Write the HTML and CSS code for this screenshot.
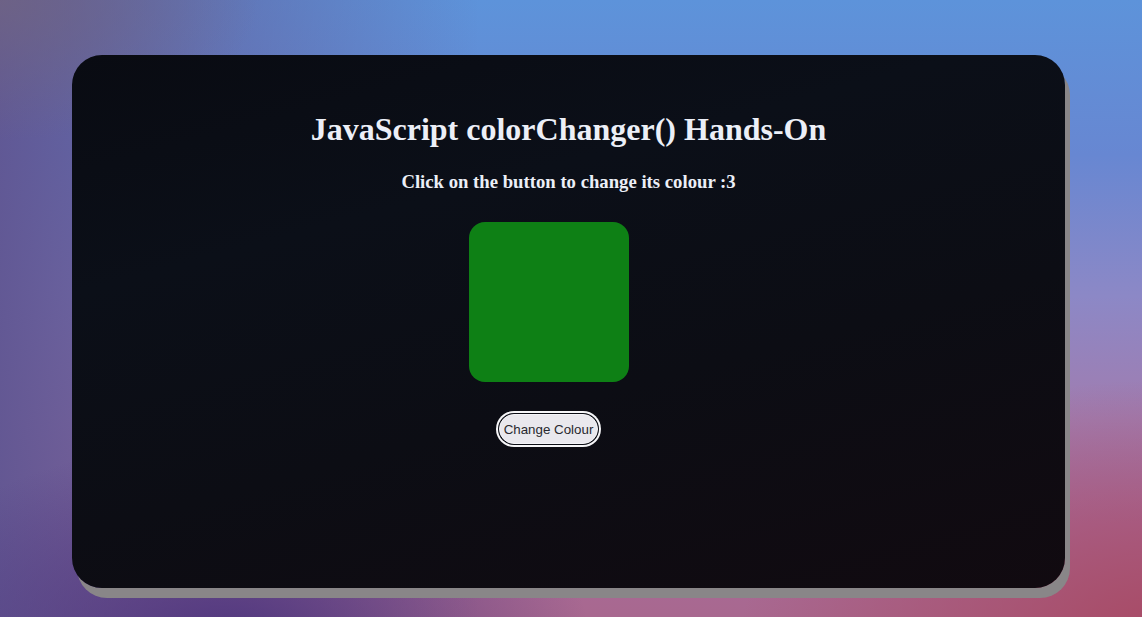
FILE: index.html
```html
<!DOCTYPE html>
<html lang="en">
<head>
<meta charset="utf-8">
<title>JavaScript colorChanger() Hands-On</title>
<link rel="stylesheet" href="styles.css">
</head>
<body>
  <main class="card">
    <h1 class="title">JavaScript colorChanger() Hands-On</h1>
    <h3 class="subtitle">Click on the button to change its colour :3</h3>
    <div class="stage">
      <div class="box"></div>
      <button class="change-btn" type="button">Change Colour</button>
    </div>
  </main>
</body>
</html>
```

FILE: styles.css
```css
html, body {
  height: 100%;
}

body {
  margin: 0;
  box-sizing: border-box;
  padding: 55px 77px 29px 72px;
  font-family: "Liberation Serif", "Times New Roman", serif;
  background:
    radial-gradient(ellipse 360px 200px at 230px 640px, rgba(74, 50, 124, 0.9), rgba(74, 50, 124, 0) 100%),
    radial-gradient(ellipse 420px 260px at 1160px 640px, rgba(168, 72, 98, 0.95), rgba(168, 72, 98, 0) 100%),
    radial-gradient(ellipse 260px 140px at 0px 0px, rgba(112, 100, 130, 0.8), rgba(112, 100, 130, 0) 100%),
    linear-gradient(to right, rgba(96, 86, 146, 0.95) 0%, rgba(100, 90, 150, 0.55) 18%, rgba(100, 90, 150, 0) 42%),
    linear-gradient(to bottom, #5d93da 0%, #6787d2 25%, #8c88c6 48%, #a17caf 68%, #a86c9c 85%, #a8688f 100%);
  overflow: hidden;
}

.card {
  height: 533px;
  border-radius: 30px;
  background: linear-gradient(165deg, #090b12 0%, #0b0f18 30%, #0c0d14 60%, #110a10 100%);
  box-shadow: 5px 10px 0 #898688;
  display: flex;
  flex-direction: column;
  align-items: center;
  padding-top: 56px;
  box-sizing: border-box;
}

.title {
  margin: 0;
  font-size: 32px;
  font-weight: bold;
  color: #eceff7;
}

.subtitle {
  margin: 23px 0 0;
  font-size: 18.72px;
  font-weight: bold;
  color: #eceff7;
}

.stage {
  margin-top: 29px;
  margin-right: 40px;
  display: flex;
  flex-direction: column;
  align-items: center;
}

.box {
  width: 160px;
  height: 160px;
  border-radius: 16px;
  background: #0e8015;
}

.change-btn {
  margin-top: 32px;
  height: 30px;
  padding: 0 4px;
  border: 1px solid #f4f4f8;
  border-radius: 15px;
  background: #e9e8ed;
  color: #28282e;
  font-family: "Liberation Sans", Arial, sans-serif;
  font-size: 13.33px;
  box-shadow: 0 0 0 1px #0b0d14, 0 0 0 3px #f6f6f8;
  cursor: pointer;
}
```
